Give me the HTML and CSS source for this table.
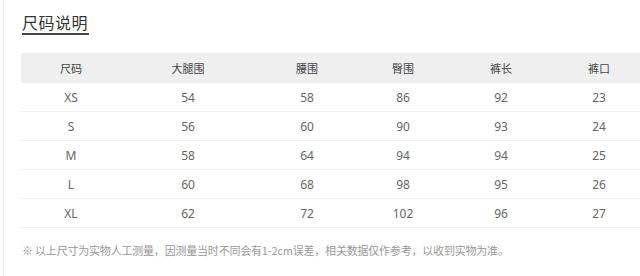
FILE: index.html
```html
<!DOCTYPE html>
<html lang="zh-CN">
<head>
<meta charset="utf-8">
<title>尺码说明</title>
<link rel="stylesheet" href="styles.css">
</head>
<body>
<div class="page">
  <div class="title-wrap"><h2 class="title">尺码说明</h2></div>
  <div class="size-table">
    <div class="row head">
      <div class="cell">尺码</div><div class="cell">大腿围</div><div class="cell">腰围</div><div class="cell">臀围</div><div class="cell">裤长</div><div class="cell">裤口</div>
    </div>
    <div class="row">
      <div class="cell">XS</div><div class="cell">54</div><div class="cell">58</div><div class="cell">86</div><div class="cell">92</div><div class="cell">23</div>
    </div>
    <div class="row">
      <div class="cell">S</div><div class="cell">56</div><div class="cell">60</div><div class="cell">90</div><div class="cell">93</div><div class="cell">24</div>
    </div>
    <div class="row">
      <div class="cell">M</div><div class="cell">58</div><div class="cell">64</div><div class="cell">94</div><div class="cell">94</div><div class="cell">25</div>
    </div>
    <div class="row">
      <div class="cell">L</div><div class="cell">60</div><div class="cell">68</div><div class="cell">98</div><div class="cell">95</div><div class="cell">26</div>
    </div>
    <div class="row">
      <div class="cell">XL</div><div class="cell">62</div><div class="cell">72</div><div class="cell">102</div><div class="cell">96</div><div class="cell">27</div>
    </div>
  </div>
  <p class="note">※ 以上尺寸为实物人工测量，因测量当时不同会有1-2cm误差，相关数据仅作参考，以收到实物为准。</p>
</div>
</body>
</html>
```

FILE: styles.css
```css
html, body {
  margin: 0;
  padding: 0;
  background: #fff;
  overflow: hidden;
}
body {
  font-family: "Noto Sans", "Noto Sans CJK SC", sans-serif;
}
.page {
  margin-left: 3px;
  border-left: 1px solid #e8e8e8;
  padding: 12px 0 0 17px;
  min-height: 276px;
  box-sizing: border-box;
}
.title-wrap {
  display: flex;
}
.title {
  margin: 0 0 0 1px;
  font-family: "Noto Sans CJK SC", serif;
  font-size: 16px;
  font-weight: 400;
  line-height: 20px;
  color: #333;
  letter-spacing: 0.5px;
  padding-bottom: 1px;
  border-bottom: 2px solid #444;
  padding-right: 1px;
}
.size-table {
  margin-top: 18px;
  width: 622px;
}
.row {
  display: grid;
  grid-template-columns: 100px 134px 104px 88px 108px 88px;
  height: 29px;
  border-bottom: 1px solid #f2f2f2;
  box-sizing: border-box;
  align-items: center;
  font-size: 12px;
  color: #666;
}
.row.head {
  height: 30px;
  background: #efefef;
  border-bottom: none;
  font-family: "Noto Sans CJK SC", sans-serif;
  font-size: 11px;
  color: #444;
}
.cell {
  text-align: center;
}
.note {
  margin: 14px 0 0 1px;
  font-family: "Noto Sans CJK SC", sans-serif;
  font-size: 11px;
  line-height: 16px;
  letter-spacing: -0.2px;
  color: #999;
}
```
